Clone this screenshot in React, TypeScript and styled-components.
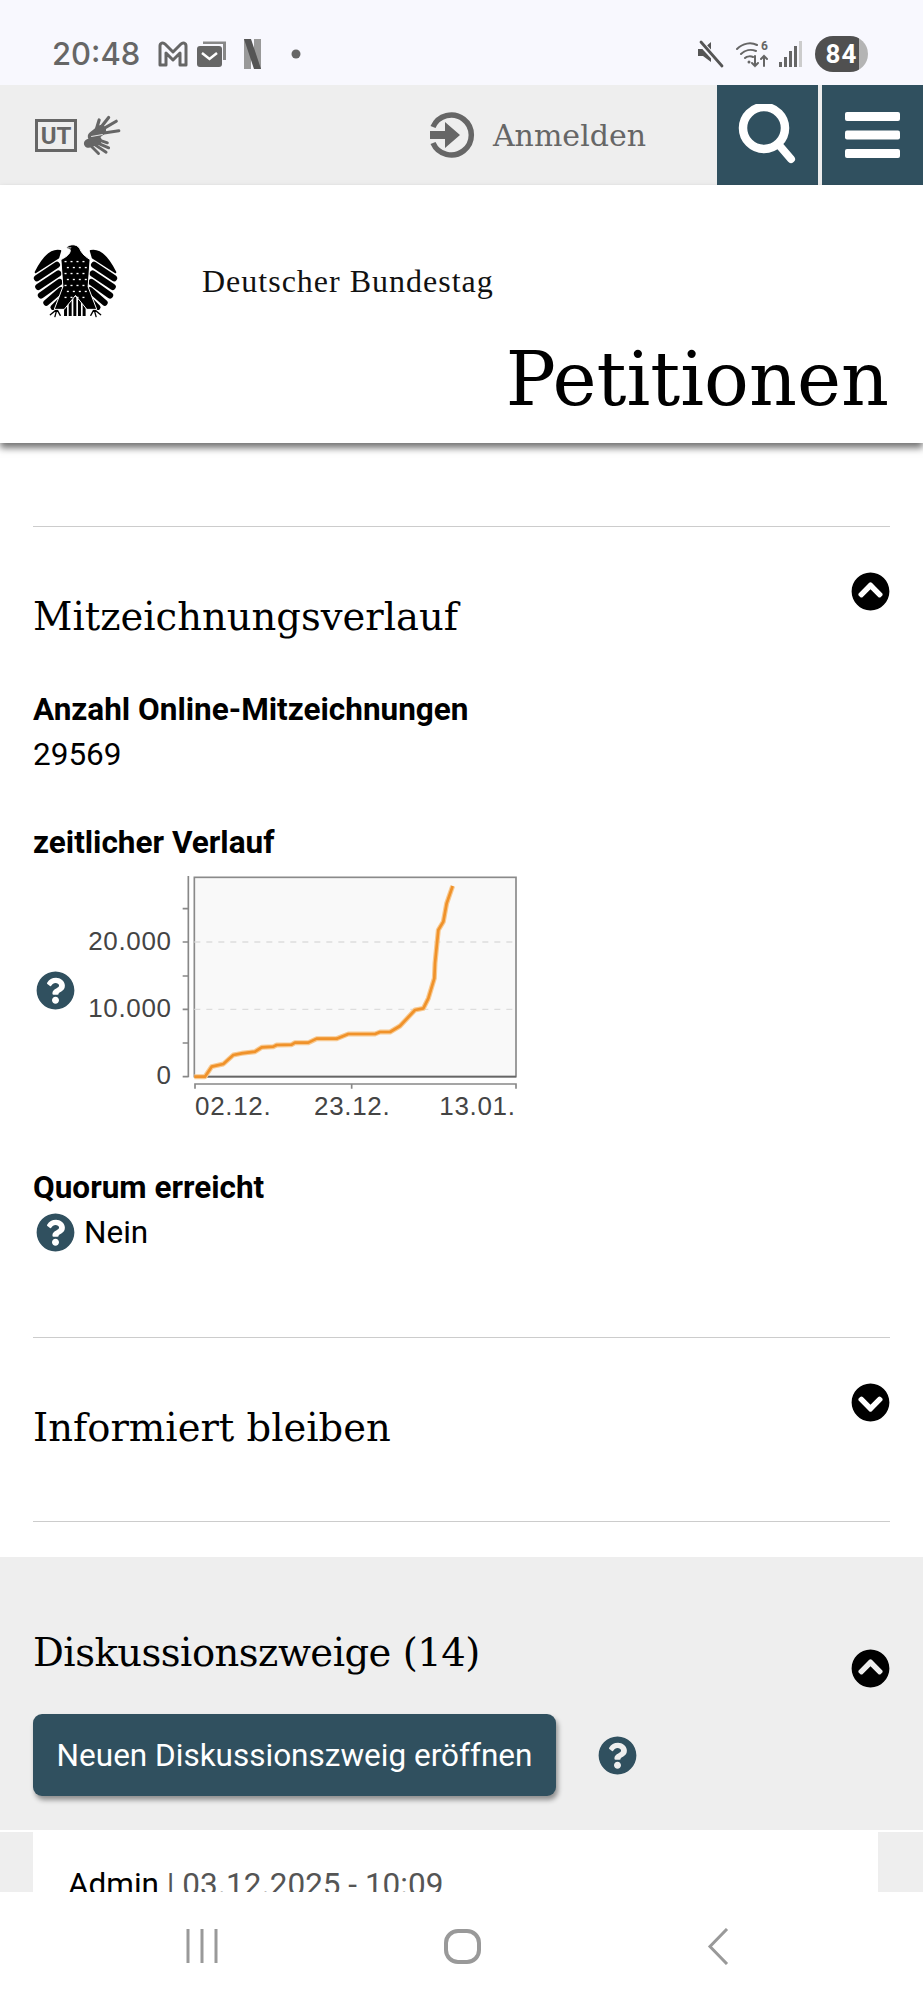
import React from 'react'
import styled, { createGlobalStyle } from 'styled-components'
import { FaChevronCircleDown, FaChevronCircleUp, FaQuestionCircle } from 'react-icons/fa'

const petrol = '#30505f'

const GlobalStyle = createGlobalStyle`
    html, body {
        margin: 0;
        padding: 0;
        background: #fff;
    }
`;

const Screen = styled.div`
    width: 923px;
    height: 2000px;
    display: flex;
    flex-direction: column;
    overflow: hidden;
    font-family: Roboto, "Liberation Sans", sans-serif;
    color: #000;
`;

const StatusBar = styled.div`
    height: 85px;
    flex: none;
    background: #f8f8fe;
    display: flex;
    align-items: center;
    padding: 22px 55px 0 52px;
    box-sizing: border-box;
    color: #666;
`;

const Clock = styled.span`
    font-family: Inter, sans-serif;
    font-size: 31px;
    font-weight: 500;
    line-height: 36px;
    width: 106px;
`;

const StatusIcons = styled.div`
    display: flex;
    align-items: center;
    gap: 8px;
`;

const Spacer = styled.div`
    flex: 1;
`;

const Battery = styled.div`
    width: 53px;
    height: 36px;
    border-radius: 18px;
    background: linear-gradient(90deg, #505050 0 83%, #b4b4b4 83% 100%);
    color: #fff;
    font-size: 26px;
    font-weight: 700;
    letter-spacing: 1px;
    display: flex;
    align-items: center;
    justify-content: center;
    margin-left: 4px;
`;

const NavBar = styled.div`
    height: 100px;
    flex: none;
    background: #eee;
    display: flex;
    align-items: center;
    padding-left: 35px;
`;

const AccessLinks = styled.div`
    display: flex;
    align-items: center;
    gap: 6px;
`;

const Login = styled.div`
    margin-left: auto;
    margin-right: 71px;
    display: flex;
    align-items: center;
    gap: 18px;
    color: #666;
    font-family: "DejaVu Serif", serif;
    font-size: 30px;
`;

const NavButton = styled.div<{ $gap?: boolean }>`
    width: 101px;
    height: 100px;
    background: ${petrol};
    margin-left: ${props => props.$gap ? '4px' : '0'};
    display: flex;
    align-items: center;
    justify-content: center;
`;

const Header = styled.header`
    position: relative;
    z-index: 2;
    flex: none;
    height: 258px;
    box-sizing: border-box;
    background: #fff;
    box-shadow: 0 5px 7px rgba(0, 0, 0, 0.55);
    padding: 58px 34px 0 33px;
`;

const BrandRow = styled.div`
    display: flex;
    align-items: center;
    gap: 84px;
`;

const Brand = styled.div`
    font-family: "Liberation Serif", serif;
    font-size: 32px;
    letter-spacing: 1px;
    color: #111;
    padding-top: 2px;
`;

const SiteTitle = styled.div`
    font-family: "DejaVu Serif", serif;
    font-size: 74.5px;
    line-height: 88px;
    text-align: right;
    margin-top: 18px;
`;

const Main = styled.main`
    flex: 1;
    min-height: 0;
    overflow: hidden;
`;

const Content = styled.div`
    padding: 83px 33px 0;
`;

const Section = styled.section<{ $last?: boolean }>`
    border-top: 1px solid #ccc;
    border-bottom: ${props => props.$last ? '1px solid #ccc' : 'none'};
`;

const SectionHead = styled.div`
    display: flex;
    justify-content: space-between;
    align-items: flex-start;
`;

const SectionTitle = styled.h2`
    margin: 68px 0 0;
    font-family: "DejaVu Serif", serif;
    font-weight: 400;
    font-size: 38.5px;
    line-height: 44px;
`;

const Toggle = styled.div`
    margin: 45px 0 0;
    font-size: 39px;
    line-height: 0;
    color: #000;
`;

const FieldLabel = styled.div<{ $top: number }>`
    margin-top: ${props => props.$top}px;
    font-size: 31.5px;
    font-weight: 700;
    line-height: 45px;
`;

const FieldValue = styled.div`
    font-size: 31.5px;
    line-height: 45px;
    display: flex;
    align-items: center;
    gap: 9px;
`;

const Help = styled.span`
    font-size: 39px;
    line-height: 0;
    color: ${petrol};
    display: inline-flex;
`;

const FieldHelp = styled(Help)`
    margin-left: 3px;
`;

const ChartRow = styled.div`
    margin-top: 5px;
    display: flex;
    align-items: flex-start;
`;

const ChartHelp = styled(Help)`
    margin: 101px 0 0 3px;
`;

const ChartSvg = styled.svg`
    display: block;
    margin-left: 5px;
`;

const Closing = styled.div`
    height: 82px;
`;

const SectionEnd = styled.div`
    height: 71px;
`;

const Grey = styled.div`
    margin-top: 35px;
    background: #eee;
`;

const GreyTop = styled.div`
    padding: 5px 33px 34px;
`;

const GreyHead = styled(SectionHead)`
    height: 112px;
`;

const GreyTitle = styled(SectionTitle)`
    margin-top: 69px;
    letter-spacing: -0.5px;
`;

const GreyToggle = styled(Toggle)`
    margin-top: 87px;
`;

const ActionRow = styled.div`
    display: flex;
    align-items: center;
    gap: 42px;
    margin-top: 40px;
`;

const ActionButton = styled.div`
    width: 523px;
    height: 82px;
    border-radius: 9px;
    background: ${petrol};
    color: #fff;
    font-size: 31.5px;
    display: flex;
    align-items: center;
    justify-content: center;
    box-shadow: 2px 4px 5px rgba(0, 0, 0, 0.4);
`;

const CardArea = styled.div`
    border-top: 2px solid #fff;
    padding: 0 45px 0 33px;
`;

const Card = styled.div`
    background: #fff;
    height: 200px;
    padding: 33px 35px;
    font-size: 31.5px;
    line-height: 40px;
    color: #555;
`;

const Author = styled.span`
    color: #000;
`;

const BottomNav = styled.div`
    height: 108px;
    flex: none;
    background: #fff;
    display: flex;
    justify-content: space-between;
    align-items: center;
    padding: 0 194px 0 186px;
    box-sizing: border-box;
`;

const curve: [number, number][] = [
    [523, 680], [555, 680], [575, 650], [610, 642], [640, 615], [665, 610], [705, 605], [725, 592],
    [760, 590], [770, 585], [815, 584], [825, 578], [865, 578], [890, 566], [950, 566], [985, 552],
    [1065, 552], [1080, 546], [1110, 546], [1140, 528], [1185, 480], [1210, 475], [1225, 445],
    [1243, 385], [1245, 340], [1255, 240], [1270, 215], [1280, 160], [1298, 108],
]

const chartLabels = [
    { x: 455, y: 299, text: '20.000', anchor: 'end' },
    { x: 455, y: 500, text: '10.000', anchor: 'end' },
    { x: 455, y: 702, text: '0', anchor: 'end' },
    { x: 525, y: 796, text: '02.12.', anchor: 'start' },
    { x: 882, y: 796, text: '23.12.', anchor: 'start' },
    { x: 1258, y: 796, text: '13.01.', anchor: 'start' },
]

const curvePoints = curve.map(p => p.join(',')).join(' ')

// drawn in the coordinates of the 3x crop, so the curve can be read straight off it
const Chart = () => (
    <ChartSvg width={440} height={255} viewBox="180 60 1320 765">
        <rect x="523" y="82" width="965" height="598" fill="#f9f9f9" stroke="#8a8a8a" strokeWidth="5" />
        <path d="M523 276H1488M523 478H1488" stroke="#ddd" strokeWidth="4" strokeDasharray="18 18" />
        <path d="M505 78V682M488 176H505M488 276H505M488 378H505M488 478H505M488 579H505M488 680H505" stroke="#888" strokeWidth="5" fill="none" />
        <path d="M525 716V702H1488V716M995 702V716" stroke="#888" strokeWidth="5" fill="none" />
        <path d="M523 680H1488" stroke="#666" strokeWidth="5" />
        <polyline points={curvePoints} fill="none" stroke="#f8c990" strokeWidth="15" strokeLinejoin="round" />
        <polyline points={curvePoints} fill="none" stroke="#f0922a" strokeWidth="8" strokeLinejoin="round" />
        {chartLabels.map((label, index) =>
            <text key={index} x={label.x} y={label.y} textAnchor={label.anchor as 'start' | 'end'} fontFamily='"Liberation Sans", sans-serif' fontSize="78" letterSpacing="2" fill="#444">{label.text}</text>
        )}
    </ChartSvg>
)

const dots: [number, number][] = []
for (let row = 0; row < 7; row++) {
    for (let i = 0; i < 4; i++) {
        dots.push([135 + i * 18 + (row % 2 ? 7 : 0), 92 + row * 18])
    }
}

const wing = (
    <g fill="none" stroke="#000" strokeLinecap="round">
        <path d="M48 126C70 82 96 56 122 62L116 82Z" fill="#000" strokeWidth="6" strokeLinejoin="round" />
        <path d="M112 104L52 144" strokeWidth="19" />
        <path d="M116 130L56 170" strokeWidth="19" />
        <path d="M120 156L64 196" strokeWidth="19" />
        <path d="M124 180L80 218" strokeWidth="18" />
        <path d="M128 204L100 232" strokeWidth="15" />
        <path d="M112 238L92 254M112 238L106 260M112 238L122 256" strokeWidth="4" />
    </g>
)

const Eagle = () => (
    <svg width={85} height={75} viewBox="40 38 256 226">
        {wing}
        <g transform="matrix(-1 0 0 1 336 0)">{wing}</g>
        <path d="M138 222V258M152 208V258M166 200V258M180 208V258M194 222V258" stroke="#000" strokeWidth="9" />
        <path d="M140 52C150 40 172 40 180 54C186 66 190 74 212 88L206 170L232 238H202L168 196L134 238H104L130 170L124 88C146 78 154 66 152 58Z" fill="#000" stroke="#fff" strokeWidth="3" />
        <path d="M142 50L156 50L154 55L144 54Z" fill="#888" />
        {dots.map(([x, y], index) => <rect key={index} x={x} y={y} width="6" height="4" fill="#fff" />)}
    </svg>
)

const HandsIcon = () => (
    <svg width={38} height={41} viewBox="245 277 120 128" fill="none" stroke="#666" strokeLinecap="round">
        <path d="M276 344L302 324" strokeWidth="32" />
        <path d="M286 325L296 292M296 322L326 284M302 324L350 296M306 334L358 326" strokeWidth="10" />
        <path d="M262 366L290 356" strokeWidth="28" />
        <path d="M268 372L294 398M276 366L318 394M284 362L326 380M292 354L322 364" strokeWidth="9" />
        <path d="M272 344L306 338" stroke="#eee" strokeWidth="3" />
    </svg>
)

const App = () => {
    return (
        <Screen>
            <GlobalStyle />
            <StatusBar>
                <Clock>20:48</Clock>
                <StatusIcons>
                    <svg width={30} height={26} viewBox="0 0 30 26" fill="none" stroke="#666" strokeWidth="3" strokeLinejoin="round">
                        <path d="M2 24V5C2 2 5 1 7 3L15 11L23 3C25 1 28 2 28 5V24H22V12L15 19L8 12V24Z" />
                    </svg>
                    <svg width={32} height={28} viewBox="0 0 32 28">
                        <path d="M7 4V1.5H30V20H27V4Z" fill="#888" />
                        <rect x="1" y="6" width="25" height="21" rx="3" fill="#666" />
                        <path d="M6 13L13.5 19L21 13" fill="none" stroke="#fff" strokeWidth="2.5" />
                    </svg>
                    <svg width={17} height={30} viewBox="0 0 17 30" style={{ marginLeft: 8 }}>
                        <rect x="0" y="0" width="7" height="30" fill="#999" />
                        <rect x="10" y="0" width="7" height="30" fill="#999" />
                        <path d="M0 0H7L17 30H10Z" fill="#555" />
                    </svg>
                    <svg width={10} height={10} viewBox="0 0 10 10" style={{ marginLeft: 22 }}>
                        <circle cx="5" cy="5" r="4.5" fill="#666" />
                    </svg>
                </StatusIcons>
                <Spacer />
                <StatusIcons>
                    <svg width={27} height={28} viewBox="0 0 27 28" style={{ marginRight: 4 }}>
                        <path d="M1 9H6L14 2V22L6 16H1Z" fill="#555" />
                        <path d="M3 2L25 26" stroke="#f8f8fe" strokeWidth="6" />
                        <path d="M4 2L25 26" stroke="#555" strokeWidth="2.8" strokeLinecap="round" />
                    </svg>
                    <svg width={35} height={30} viewBox="0 0 35 30" fill="none" stroke="#666" strokeWidth="2" strokeLinecap="round">
                        <path d="M1 10C7 4 15 3 21 6M5 15C9 11 15 10 20 12M9 19C11 17 15 17 17 18" />
                        <circle cx="13" cy="23" r="1.5" fill="#666" stroke="none" />
                        <path d="M19 17V27M16 24L19 27L22 24M28 27V17M25 20L28 17L31 20" />
                        <text x="25" y="11" fontFamily="Roboto, sans-serif" fontSize="12" fontWeight="700" fill="#666" stroke="none">6</text>
                    </svg>
                    <svg width={24} height={26} viewBox="0 0 24 26">
                        <rect x="0" y="21" width="3" height="5" fill="#666" />
                        <rect x="5" y="16" width="3" height="10" fill="#666" />
                        <rect x="10" y="10" width="3" height="16" fill="#666" />
                        <rect x="15" y="5" width="3" height="21" fill="#666" />
                        <rect x="20" y="0" width="3" height="26" fill="#ccc" />
                    </svg>
                    <Battery>84</Battery>
                </StatusIcons>
            </StatusBar>
            <NavBar>
                <AccessLinks>
                    <svg width={42} height={33} viewBox="0 0 42 33">
                        <rect x="1.5" y="1.5" width="39" height="30" fill="none" stroke="#666" strokeWidth="3" />
                        <text x="21" y="25" textAnchor="middle" fontFamily="Roboto, sans-serif" fontSize="24" fontWeight="700" fill="#666">UT</text>
                    </svg>
                    <HandsIcon />
                </AccessLinks>
                <Login>
                    <svg width={45} height={46} viewBox="0 0 45 46" fill="none">
                        <path d="M3 15A20 20 0 1 1 3 31" stroke="#666" strokeWidth="5.5" />
                        <path d="M0 19H15V10L30 23L15 36V27H0Z" fill="#666" />
                    </svg>
                    Anmelden
                </Login>
                <NavButton>
                    <svg width={62} height={62} viewBox="0 0 62 62" fill="none" stroke="#fff" strokeLinecap="round">
                        <circle cx="27" cy="24" r="21" strokeWidth="8.5" />
                        <path d="M42 41L54 55" strokeWidth="8" />
                    </svg>
                </NavButton>
                <NavButton $gap>
                    <svg width={55} height={46} viewBox="0 0 55 46" fill="#fff">
                        <rect x="0" y="0" width="55" height="9" rx="2" />
                        <rect x="0" y="18.5" width="55" height="9" rx="2" />
                        <rect x="0" y="37" width="55" height="9" rx="2" />
                    </svg>
                </NavButton>
            </NavBar>
            <Header>
                <BrandRow>
                    <Eagle />
                    <Brand>Deutscher Bundestag</Brand>
                </BrandRow>
                <SiteTitle>Petitionen</SiteTitle>
            </Header>
            <Main>
                <Content>
                    <Section>
                        <SectionHead>
                            <SectionTitle>Mitzeichnungsverlauf</SectionTitle>
                            <Toggle><FaChevronCircleUp /></Toggle>
                        </SectionHead>
                        <FieldLabel $top={48}>Anzahl Online-Mitzeichnungen</FieldLabel>
                        <FieldValue>29569</FieldValue>
                        <FieldLabel $top={43}>zeitlicher Verlauf</FieldLabel>
                        <ChartRow>
                            <ChartHelp><FaQuestionCircle /></ChartHelp>
                            <Chart />
                        </ChartRow>
                        <FieldLabel $top={40}>Quorum erreicht</FieldLabel>
                        <FieldValue><FieldHelp><FaQuestionCircle /></FieldHelp>Nein</FieldValue>
                        <Closing />
                    </Section>
                    <Section $last>
                        <SectionHead>
                            <SectionTitle>Informiert bleiben</SectionTitle>
                            <Toggle><FaChevronCircleDown /></Toggle>
                        </SectionHead>
                        <SectionEnd />
                    </Section>
                </Content>
                <Grey>
                    <GreyTop>
                        <GreyHead>
                            <GreyTitle>Diskussionszweige (14)</GreyTitle>
                            <GreyToggle><FaChevronCircleUp /></GreyToggle>
                        </GreyHead>
                        <ActionRow>
                            <ActionButton>Neuen Diskussionszweig eröffnen</ActionButton>
                            <Help><FaQuestionCircle /></Help>
                        </ActionRow>
                    </GreyTop>
                    <CardArea>
                        <Card><Author>Admin</Author> | 03.12.2025 - 10:09</Card>
                    </CardArea>
                </Grey>
            </Main>
            <BottomNav>
                <svg width={32} height={34} viewBox="0 0 32 34" stroke="#999" strokeWidth="3">
                    <path d="M2 0V34M16 0V34M30 0V34" />
                </svg>
                <svg width={37} height={35} viewBox="0 0 37 35" fill="none" stroke="#999" strokeWidth="4">
                    <rect x="2" y="2" width="33" height="31" rx="12" />
                </svg>
                <svg width={22} height={37} viewBox="0 0 22 37" fill="none" stroke="#999" strokeWidth="3">
                    <path d="M20 1L3 18.5L20 36" />
                </svg>
            </BottomNav>
        </Screen>
    )
}

export default App;
